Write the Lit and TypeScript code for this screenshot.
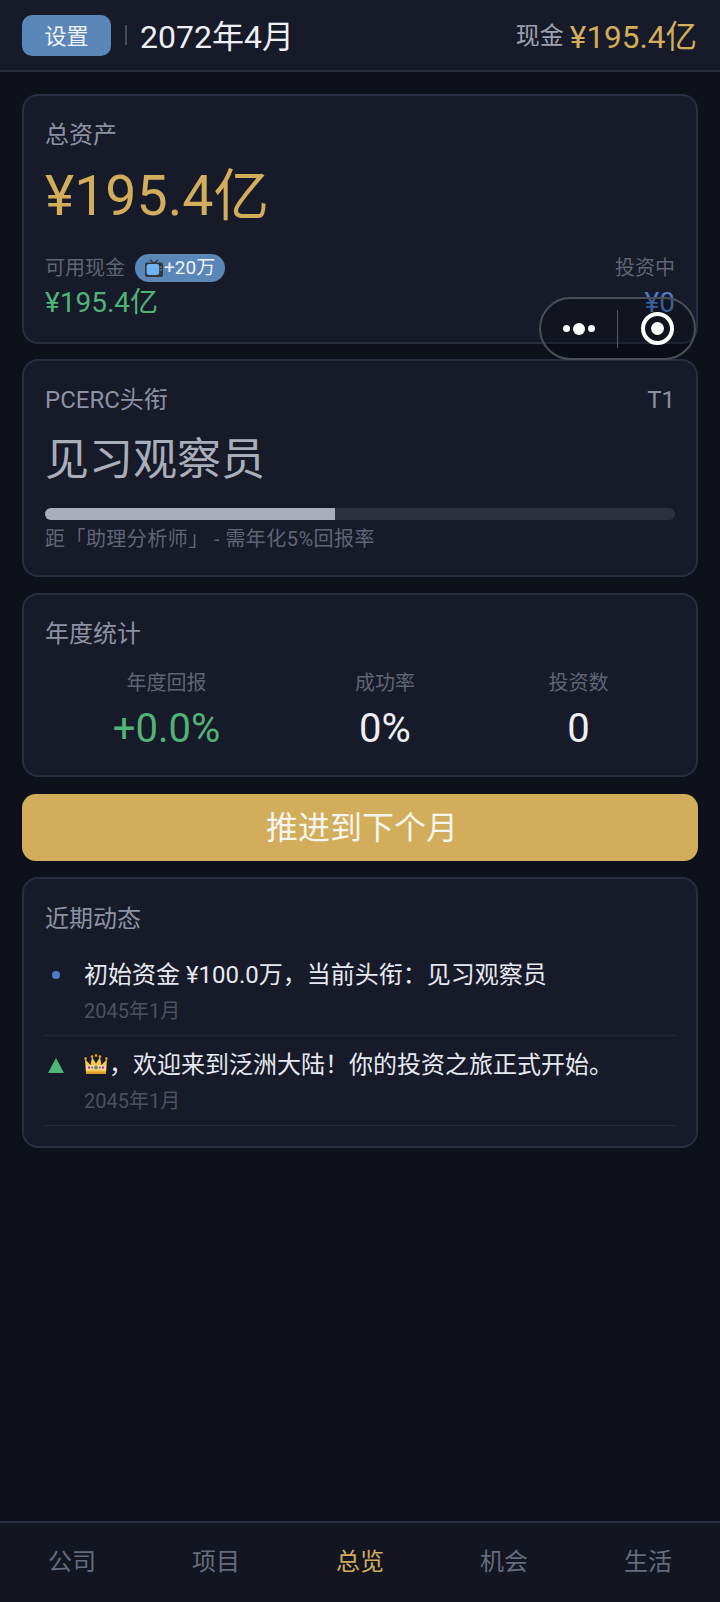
import { LitElement, html, css } from 'lit';
import { customElement } from 'lit/decorators.js';

const tvIcon = html`<svg class="tv" viewBox="0 0 18 18" width="18" height="18">
  <path d="M5 .8 L9 4.4 L13 .8" fill="none" stroke="#34383e" stroke-width="1.4" />
  <rect x="0" y="3.6" width="18" height="14.4" rx="2" fill="#34383e" />
  <rect x="1.6" y="5" width="12.6" height="11" rx="2.4" fill="#6cb4f2" />
  <circle cx="16" cy="8" r=".8" fill="#8a8f96" />
  <circle cx="16" cy="11" r=".8" fill="#8a8f96" />
</svg>`;

const crownIcon = html`<svg class="crown" viewBox="0 0 24 22" width="24" height="22">
  <path d="M2 20 L1 5 L6.5 11 L8 3 L12 9.5 L16 3 L17.5 11 L23 5 L22 20 Z" fill="#f7c54c" />
  <circle cx="1.6" cy="4.6" r="1.3" fill="#f0a030" />
  <circle cx="8" cy="2.6" r="1.3" fill="#f0a030" />
  <circle cx="12" cy="1.6" r="1.3" fill="#f0a030" />
  <circle cx="16" cy="2.6" r="1.3" fill="#f0a030" />
  <circle cx="22.4" cy="4.6" r="1.3" fill="#f0a030" />
  <rect x="2" y="11" width="20" height="5" fill="#f2d9a0" />
  <circle cx="5" cy="13.5" r="1.2" fill="#c2378e" />
  <circle cx="8.2" cy="13.5" r="1" fill="#c2378e" />
  <circle cx="12" cy="13.5" r="2" fill="#7c8f4a" />
  <circle cx="15.8" cy="13.5" r="1" fill="#c2378e" />
  <circle cx="19" cy="13.5" r="1.2" fill="#c2378e" />
  <rect x="2" y="17.6" width="20" height="2.4" fill="#e39a2e" />
</svg>`;

@customElement('app-root')
export class AppRoot extends LitElement {
  static styles = css`
    :host {
      display: block;
      font-family: Roboto, 'Noto Sans CJK SC', sans-serif;
      font-weight: 400;
      text-spacing-trim: space-all;
      background: #0e1119;
      color: #e6e9f0;
    }
    .page {
      position: relative;
      height: 1602px;
      display: flex;
      flex-direction: column;
      overflow: hidden;
    }
    header {
      height: 72px;
      flex: none;
      box-sizing: border-box;
      background: #171a28;
      border-bottom: 2px solid #2a2e40;
      padding: 0 22px;
      display: flex;
      align-items: center;
    }
    .settings {
      width: 89px;
      height: 41px;
      margin-top: 1px;
      box-sizing: border-box;
      padding-bottom: 3px;
      border-radius: 10px;
      background: #5a86b8;
      color: #f0f3f8;
      font-size: 22px;
      display: flex;
      align-items: center;
      justify-content: center;
    }
    .sep {
      width: 2px;
      height: 20px;
      background: #454a5c;
      margin: 0 13px 0 14px;
    }
    .date {
      font-size: 32px;
      line-height: 40px;
      padding-top: 4px;
      color: #eef0f5;
    }
    .cash {
      margin-left: auto;
      padding-bottom: 2px;
      padding-right: 1px;
      display: flex;
      align-items: center;
      gap: 6px;
    }
    .cash span {
      font-size: 24px;
      padding-bottom: 2px;
      color: #9ba1b1;
    }
    .cash b {
      font-weight: 400;
      font-size: 31.5px;
      color: #d1ad5c;
    }
    main {
      flex: 1;
      padding: 22px 22px 0;
      display: flex;
      flex-direction: column;
      gap: 16px;
    }
    .card {
      box-sizing: border-box;
      background: #171a28;
      border: 2px solid #2a2e40;
      border-radius: 16px;
      padding: 23px 21px 0;
    }
    .label {
      font-size: 24px;
      line-height: 32px;
      color: #8c92a4;
    }
    .assets { height: 250px; }
    .total {
      font-size: 55.5px;
      line-height: 76px;
      color: #d1ad5c;
      margin-top: 8px;
    }
    .split {
      display: flex;
      justify-content: space-between;
      margin-top: 17px;
    }
    .small {
      font-size: 20px;
      line-height: 32px;
      color: #5f6577;
    }
    .avail {
      display: flex;
      align-items: center;
      gap: 10px;
    }
    .pill {
      height: 28px;
      padding: 0 10px;
      border-radius: 14px;
      background: #5a86b8;
      color: #f0f3f8;
      font-size: 19px;
      display: flex;
      align-items: center;
      gap: 1px;
    }
    .green {
      color: #50b478;
      font-size: 28px;
      line-height: 38px;
    }
    .blue {
      color: #4d7cc9;
      font-size: 28px;
      line-height: 38px;
      text-align: right;
    }
    .right { text-align: right; }
    .rank {
      height: 218px;
      margin-top: -1px;
    }
    .row {
      display: flex;
      justify-content: space-between;
    }
    .title {
      font-size: 44px;
      line-height: 60px;
      color: #a9aebb;
      margin-top: 14px;
    }
    .bar {
      height: 12px;
      border-radius: 6px;
      background: #2d313f;
      margin-top: 18px;
      overflow: hidden;
    }
    .fill {
      height: 100%;
      background: #a9aebb;
    }
    .hint {
      font-size: 20px;
      line-height: 30px;
      letter-spacing: 0.45px;
      color: #5f6577;
      margin-top: 4px;
      white-space: pre;
    }
    .stats { height: 184px; }
    .stat-grid {
      display: grid;
      grid-template-columns: 243px 194px 1fr;
      margin-top: 17px;
      text-align: center;
    }
    .stat-grid .small { display: block; }
    .value {
      font-size: 40px;
      line-height: 56px;
      color: #eef0f5;
      margin-top: 2px;
    }
    .value.up { color: #50b478; }
    .advance {
      height: 67px;
      margin-top: 1px;
      box-sizing: border-box;
      padding: 0 0 6px 4px;
      border-radius: 14px;
      background: #d1ad5c;
      color: #f7f5ee;
      font-size: 32px;
      display: flex;
      align-items: center;
      justify-content: center;
      flex: none;
    }
    .news { height: 271px; }
    .news .label { margin-top: 1px; }
    .list { margin-top: 11px; }
    .item {
      display: flex;
      height: 90px;
      box-sizing: border-box;
      border-bottom: 1px solid #272b3a;
      padding-top: 11px;
    }
    .mark {
      width: 39px;
      flex: none;
      height: 36px;
      display: flex;
      align-items: center;
      padding-left: 3px;
      box-sizing: border-box;
    }
    .dot {
      width: 8px;
      height: 8px;
      border-radius: 50%;
      background: #4d7cc9;
      margin-left: 4px;
    }
    .tri {
      width: 0;
      height: 0;
      border-left: 8.5px solid transparent;
      border-right: 8.5px solid transparent;
      border-bottom: 15px solid #50b478;
    }
    .msg {
      font-size: 24px;
      line-height: 36px;
      color: #e6e9f0;
      display: flex;
      align-items: center;
      white-space: pre;
    }
    .when {
      font-size: 20px;
      line-height: 30px;
      color: #4c5162;
      margin-top: 3px;
    }
    .crown { margin-right: 1px; }
    nav {
      height: 81px;
      flex: none;
      box-sizing: border-box;
      background: #131621;
      border-top: 2px solid #2a2e40;
      padding-bottom: 6px;
      display: grid;
      grid-template-columns: repeat(5, 1fr);
      align-items: center;
      text-align: center;
      font-size: 24px;
      color: #666c7e;
    }
    nav .on { color: #d1ad5c; }
    .capsule {
      position: absolute;
      left: 539px;
      top: 297px;
      width: 157px;
      height: 63px;
      box-sizing: border-box;
      border-radius: 32px;
      border: 2px solid #4b4e56;
      background: rgba(4, 4, 8, 0.25);
      display: flex;
      align-items: center;
    }
    .more {
      width: 76px;
      display: flex;
      align-items: center;
      justify-content: center;
      gap: 3px;
    }
    .more i {
      width: 7px;
      height: 7px;
      border-radius: 50%;
      background: #fff;
    }
    .more i:nth-child(2) {
      width: 12px;
      height: 12px;
    }
    .divider {
      width: 1px;
      height: 38px;
      background: #55585f;
    }
    .target {
      margin-left: 23px;
      width: 33px;
      height: 33px;
      box-sizing: border-box;
      border: 4px solid #fff;
      border-radius: 50%;
      display: flex;
      align-items: center;
      justify-content: center;
    }
    .target i {
      width: 13px;
      height: 13px;
      border-radius: 50%;
      background: #fff;
    }
  `;

  render() {
    return html`
      <div class="page">
        <header>
          <div class="settings">设置</div>
          <div class="sep"></div>
          <div class="date">2072年4月</div>
          <div class="cash"><span>现金</span><b>¥195.4亿</b></div>
        </header>
        <main>
          <section class="card assets">
            <div class="label">总资产</div>
            <div class="total">¥195.4亿</div>
            <div class="split">
              <div>
                <div class="avail small">可用现金<span class="pill">${tvIcon}+20万</span></div>
                <div class="green">¥195.4亿</div>
              </div>
              <div class="right">
                <div class="small">投资中</div>
                <div class="blue">¥0</div>
              </div>
            </div>
          </section>
          <section class="card rank">
            <div class="row label"><span>PCERC头衔</span><span>T1</span></div>
            <div class="title">见习观察员</div>
            <div class="bar"><div class="fill" style="width: 46%"></div></div>
            <div class="hint">距「助理分析师」 - 需年化5%回报率</div>
          </section>
          <section class="card stats">
            <div class="label">年度统计</div>
            <div class="stat-grid">
              <div><span class="small">年度回报</span><div class="value up">+0.0%</div></div>
              <div><span class="small">成功率</span><div class="value">0%</div></div>
              <div><span class="small">投资数</span><div class="value">0</div></div>
            </div>
          </section>
          <div class="advance">推进到下个月</div>
          <section class="card news">
            <div class="label">近期动态</div>
            <div class="list">
              <div class="item">
                <div class="mark"><div class="dot"></div></div>
                <div>
                  <div class="msg">初始资金 ¥100.0万，当前头衔：见习观察员</div>
                  <div class="when">2045年1月</div>
                </div>
              </div>
              <div class="item">
                <div class="mark"><div class="tri"></div></div>
                <div>
                  <div class="msg">${crownIcon}，欢迎来到泛洲大陆！你的投资之旅正式开始。</div>
                  <div class="when">2045年1月</div>
                </div>
              </div>
            </div>
          </section>
        </main>
        <nav>
          <div>公司</div>
          <div>项目</div>
          <div class="on">总览</div>
          <div>机会</div>
          <div>生活</div>
        </nav>
        <div class="capsule">
          <div class="more"><i></i><i></i><i></i></div>
          <div class="divider"></div>
          <div class="target"><i></i></div>
        </div>
      </div>
    `;
  }
}
